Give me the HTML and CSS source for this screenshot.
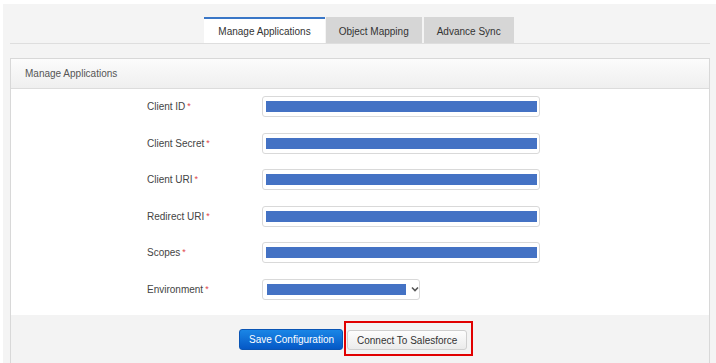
FILE: index.html
```html
<!DOCTYPE html>
<html>
<head>
<meta charset="utf-8">
<link rel="stylesheet" href="styles.css">
</head>
<body>
<div class="page">
  <nav class="tabs">
    <div class="tab active">Manage Applications</div>
    <div class="tab">Object Mapping</div>
    <div class="tab">Advance Sync</div>
  </nav>
  <section class="panel">
    <header class="panel-head">Manage Applications</header>
    <div class="panel-body">
      <div class="form">
        <label class="lbl">Client ID<span class="req">*</span></label>
        <div class="input"><div class="fill"></div></div>
        <label class="lbl">Client Secret<span class="req">*</span></label>
        <div class="input"><div class="fill"></div></div>
        <label class="lbl">Client URI<span class="req">*</span></label>
        <div class="input"><div class="fill"></div></div>
        <label class="lbl">Redirect URI<span class="req">*</span></label>
        <div class="input"><div class="fill"></div></div>
        <label class="lbl">Scopes<span class="req">*</span></label>
        <div class="input"><div class="fill"></div></div>
        <label class="lbl">Environment<span class="req">*</span></label>
        <div class="select">
          <div class="fill sel-fill"></div>
          <svg class="chev" width="8" height="6" viewBox="0 0 8 6"><polyline points="1,1.5 4,4.5 7,1.5" fill="none" stroke="#555" stroke-width="1.6"/></svg>
        </div>
      </div>
    </div>
    <footer class="panel-foot">
      <button class="btn btn-primary">Save Configuration</button>
      <span class="highlight"><button class="btn btn-default">Connect To Salesforce</button></span>
    </footer>
  </section>
</div>
</body>
</html>
```
FILE: styles.css
```css
* { box-sizing: border-box; }
html, body { margin: 0; padding: 0; background: #fff; }
body {
  font-family: "Liberation Sans", Arial, sans-serif;
  font-size: 10px;
  color: #333;
  height: 363px;
  overflow: hidden;
}
.page {
  margin: 4px 0 0 3px;
  background: #f4f4f4;
  padding: 13px 6px 0 7px;
  height: 359px;
}
.tabs {
  display: flex;
  justify-content: center;
  border-bottom: 1px solid #dedede;
  height: 27px;
}
.tab {
  height: 26px;
  padding: 1px 13px 0;
  line-height: 23px;
  background: #d6d6d6;
  border-top: 2px solid #d6d6d6;
  color: #333;
  margin-right: 2px;
  white-space: nowrap;
}
.tab.active {
  background: #fff;
  border-top-color: #3a77c7;
  padding: 1px 14px 0;
  margin-right: 1px;
}
.panel {
  margin-top: 14px;
  border: 1px solid #d8d8d8;
  background: #fff;
  height: 320px;
}
.panel-head {
  height: 30px;
  line-height: 29px;
  padding-left: 14px;
  background: linear-gradient(#fcfcfc, #efefef);
  border-bottom: 1px solid #dcdcdc;
  color: #555;
}
.panel-body {
  padding: 7px 0 15px 136px;
}
.form {
  display: grid;
  grid-template-columns: 115px 278px;
  row-gap: 15.6px;
  align-items: center;
}
.lbl {
  color: #444;
  white-space: nowrap;
}
.req {
  color: #e0464a;
  font-size: 9px;
  margin-left: 2px;
  position: relative;
  top: -1px;
}
.input {
  height: 21px;
  border: 1px solid #d9d9d9;
  border-radius: 3px;
  padding: 4px 2px 4px 3px;
  background: #fff;
}
.fill {
  height: 11px;
  background: #4472c4;
}
.select {
  width: 158px;
  height: 21px;
  border: 1px solid #d9d9d9;
  border-radius: 3px;
  padding: 4px 0 4px 4px;
  display: flex;
  align-items: center;
}
.sel-fill {
  width: 139px;
  flex: none;
}
.chev { margin-left: 5px; flex: none; }
.panel-foot {
  background: #f3f3f3;
  height: 60px;
  display: flex;
  justify-content: center;
  align-items: flex-start;
  padding: 6px 8px 0 0;
}
.btn {
  font-family: "Liberation Sans", Arial, sans-serif;
  font-size: 10px;
  height: 21px;
  border-radius: 3px;
  padding: 0 9px;
  line-height: 19px;
  cursor: pointer;
  white-space: nowrap;
}
.btn-primary {
  width: 104px;
  margin-top: 8px;
  margin-right: 1px;
  color: #fff;
  background: linear-gradient(#1a86e6, #0558c6);
  border: 1px solid #0a55b4;
}
.btn-default {
  width: 120px;
  height: 20px;
  color: #333;
  background: linear-gradient(#fdfdfd, #ebebeb);
  border: 1px solid #cfcfcf;
}
.highlight {
  display: inline-block;
  border: 2px solid #e10000;
  padding: 7px 4px 4px 1px;
}
```
